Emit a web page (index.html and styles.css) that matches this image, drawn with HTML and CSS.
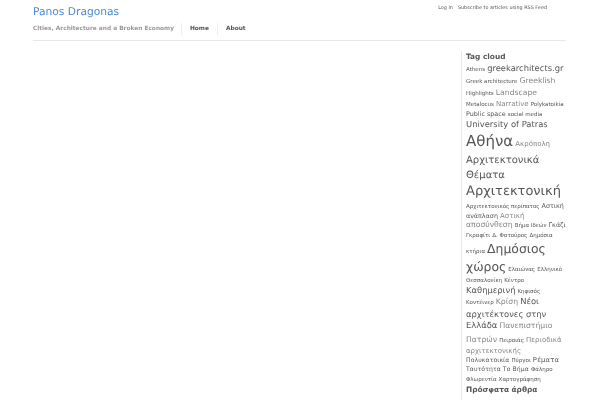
FILE: index.html
```html
<!DOCTYPE html>
<html lang="el">
<head>
<meta charset="utf-8">
<title>Panos Dragonas</title>
<link rel="stylesheet" href="styles.css">
</head>
<body>
<div class="page">
  <header class="header">
    <div class="top">
      <a class="site-title" href="#">Panos Dragonas</a>
      <ul class="meta"><li>Log in</li><li>Subscribe to articles using RSS Feed</li></ul>
    </div>
    <nav class="nav">
      <span class="tagline">Cities, Architecture and a Broken Economy</span>
      <a class="nav-link" href="#">Home</a>
      <a class="nav-link" href="#">About</a>
    </nav>
  </header>
  <div class="content">
    <main class="main"></main>
    <aside class="sidebar">
      <h3 class="widget-title">Tag cloud</h3>
      <div class="cloud">
        <a class="t1">Athens</a> <a class="t3">greekarchitects.gr</a> <a class="t1">Greek architecture</a> <a class="t4">Greeklish</a> <a class="t1">Highlights</a> <a class="t4">Landscape</a> <a class="t1">Metalocus</a> <a class="t2l">Narrative</a> <a class="t1">Polykatoikia</a> <a class="t2">Public space</a> <a class="t1">social media</a> <a class="t3 tight">University of Patras</a> <a class="t6">Αθήνα</a> <a class="t2l">Ακρόπολη</a> <a class="t5">Αρχιτεκτονικά Θέματα</a> <a class="t7">Αρχιτεκτονική</a> <a class="t1">Αρχιτεκτονικός περίπατος</a> <a class="t2">Αστική ανάπλαση</a> <a class="t2l tight">Αστική</a> <a class="t4 tight">αποσύνθεση</a> <a class="t1">Βήμα Ιδεών</a> <a class="t2">Γκάζι</a> <a class="t1">Γκραφίτι</a> <a class="t1">Δ. Φατούρος</a> <a class="t1">Δημόσια κτήρια</a> <a class="t6b">Δημόσιος χώρος</a> <a class="t1">Ελαιώνας</a> <a class="t1">Ελληνικό</a> <a class="t1">Θεσσαλονίκη</a> <a class="t1">Κέντρο</a> <a class="t3 tight">Καθημερινή</a> <a class="t1">Κηφισός</a> <a class="t1">Κοντέινερ</a> <a class="t4">Κρίση</a> <a class="t3 tight">Νέοι αρχιτέκτονες στην Ελλάδα</a> <a class="t4 wide">Πανεπιστήμιο Πατρών</a> <a class="t1">Πειραιάς</a> <a class="t2l">Περιοδικά αρχιτεκτονικής</a> <a class="t1w">Πολυκατοικία</a> <a class="t1">Πύργοι</a> <a class="t2w">Ρέματα</a> <a class="t1w">Ταυτότητα</a> <a class="t1w">Το Βήμα</a> <a class="t1">Φάληρο</a> <a class="t1">Φλωρεντία</a> <a class="t1">Χαρτογράφηση</a>
      </div>
      <h3 class="widget-title recent">Πρόσφατα άρθρα</h3>
    </aside>
  </div>
</div>
</body>
</html>
```

FILE: styles.css
```css
html, body { margin: 0; padding: 0; background: #fff; }
body { font-family: "DejaVu Sans", sans-serif; color: #555; overflow: hidden; height: 400px; text-rendering: geometricPrecision; }
.page { width: 533px; margin-left: 33px; filter: blur(.25px); }
.header { border-bottom: 1px solid #e8e8e8; height: 40px; }
.top { display: flex; justify-content: space-between; height: 22px; }
.site-title { font-size: 10.7px; line-height: 24px; color: #4a8ad4; text-decoration: none; }
.meta { list-style: none; margin: 3px 0 0; padding: 0 19px 0 0; display: flex; gap: 5px; font-size: 4.9px; line-height: 10px; }
.nav { display: flex; align-items: center; height: 12px; margin-top: 1px; font-size: 5.85px; font-weight: bold; }
.tagline { color: #999; padding-right: 7px; border-right: 1px solid #eee; line-height: 12px; }
.nav-link { color: #555; padding: 0 8px; text-decoration: none; border-right: 1px solid #eee; line-height: 12px; }
.nav-link:last-child { border-right: 0; }
.content { display: flex; justify-content: flex-end; }
.sidebar { width: 100px; margin-right: -2px; padding-right: 2px; border-left: 1px solid #e8e8e8; padding-left: 4px; margin-top: 10px; height: 350px; flex: none; }
.widget-title { font-size: 7.4px; line-height: 12px; margin: 0; font-weight: bold; color: #555; }
.recent { line-height: 11px; }
.cloud { font-size: 6.5px; line-height: 1.36; }
.t1 { font-size: 5.5px; }
.t1w { font-size: 6.1px; letter-spacing: .1px; }
.t2 { font-size: 6.4px; }
.t2w { font-size: 6.8px; letter-spacing: .2px; }
.t2l { font-size: 7px; color: #888; line-height: 1.45; }
.t3 { font-size: 8.4px; line-height: 1.42; }
.t4 { font-size: 7.7px; color: #888; line-height: 1.58; }
.t5 { font-size: 10px; line-height: 1.5; }
.t6 { font-size: 15px; line-height: 1.55; }
.t6b { font-size: 12.4px; line-height: 1.42; }
.t7 { font-size: 13px; line-height: 1.45; }
.tight { line-height: 1.22; }
.wide { line-height: 1.7; }
```
